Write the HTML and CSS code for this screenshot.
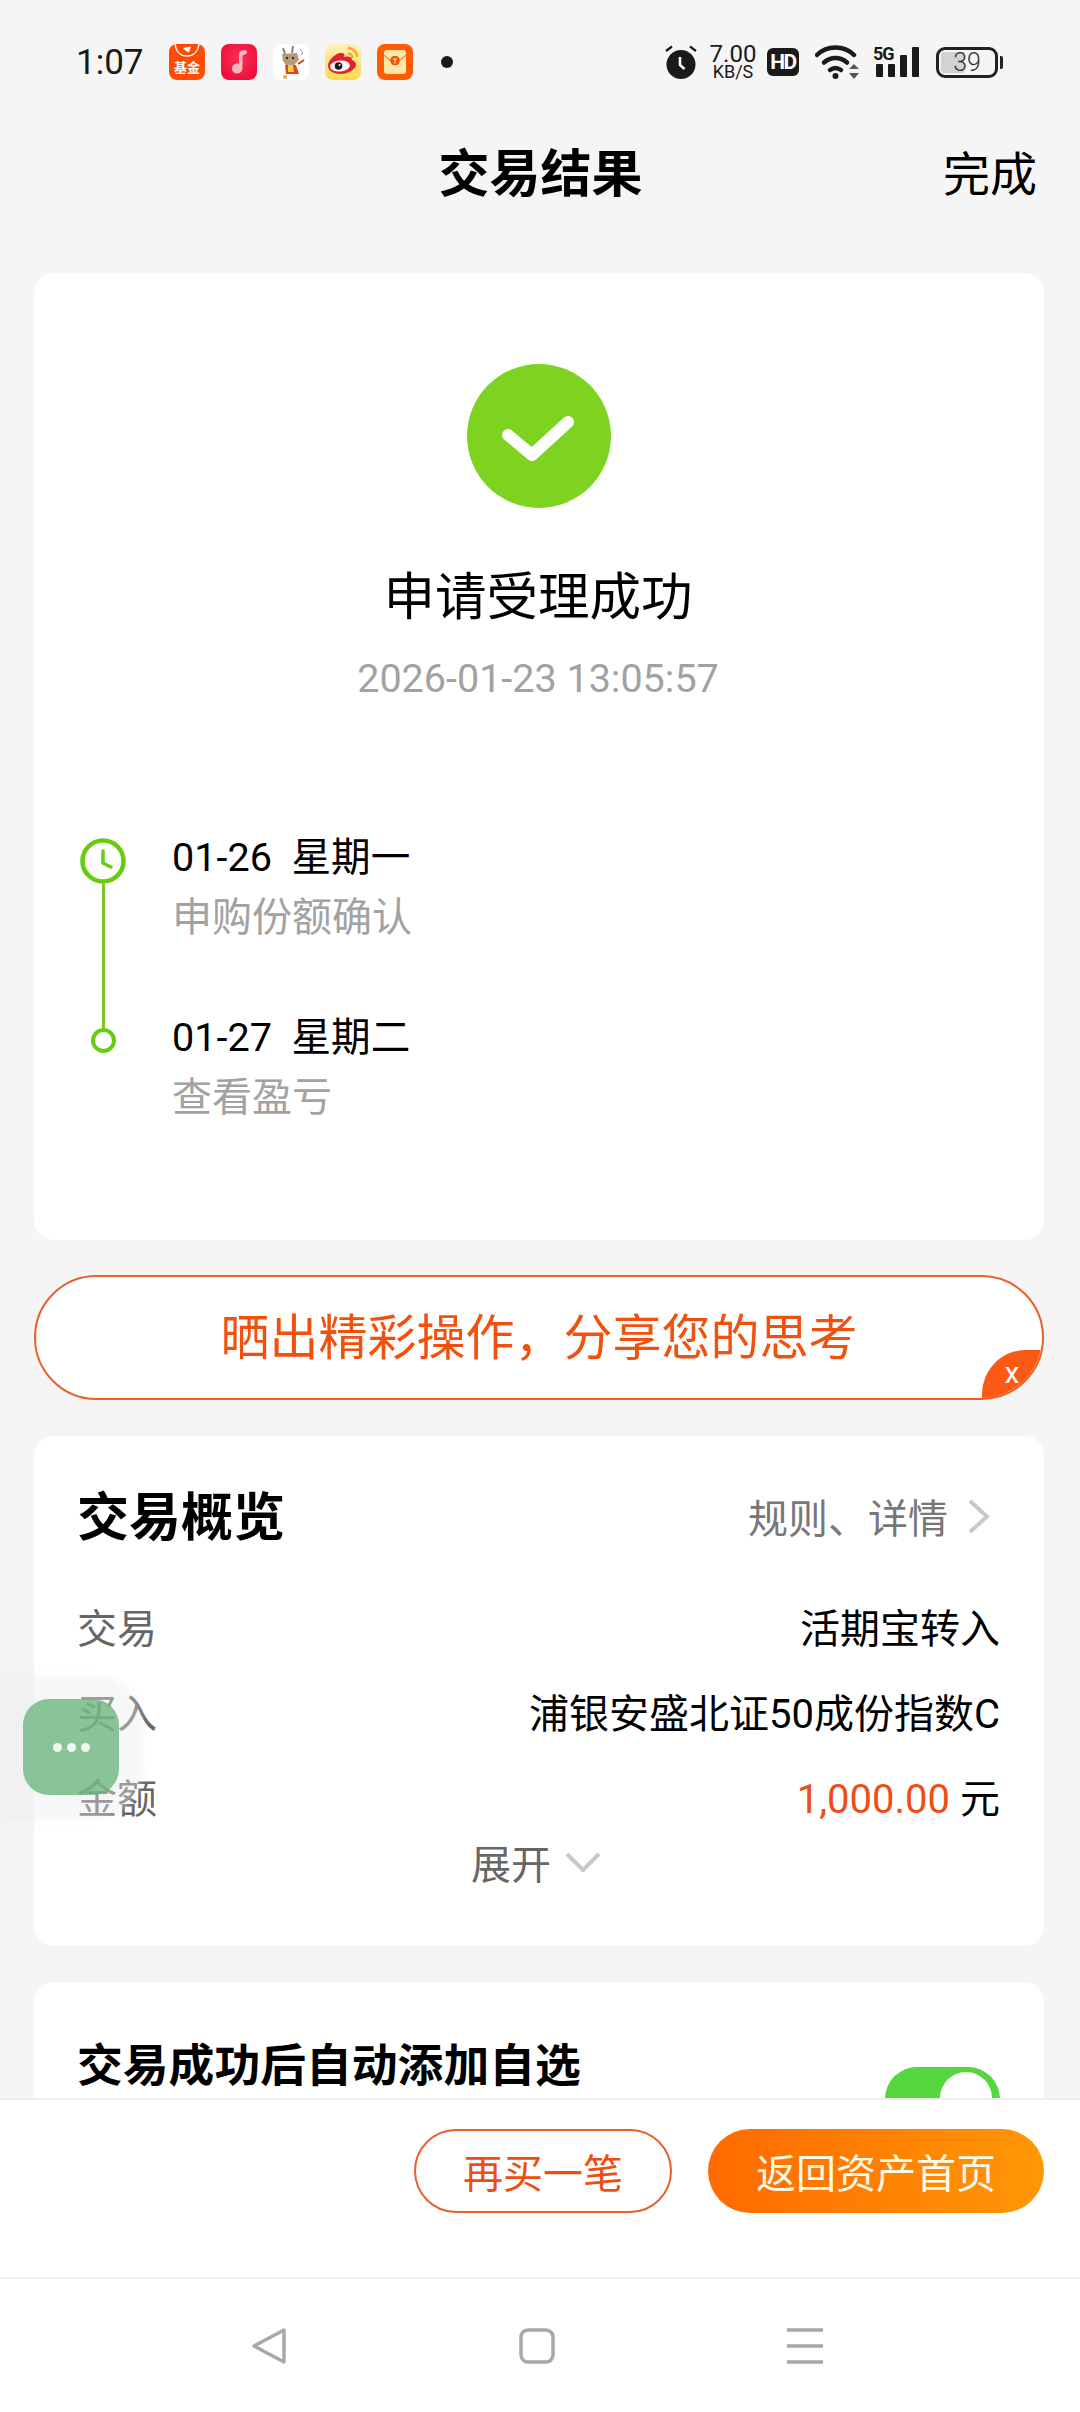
FILE: index.html
```html
<!DOCTYPE html>
<html lang="zh-CN">
<head>
    <meta charset="UTF-8">
    <meta name="viewport" content="width=device-width, initial-scale=1.0">
    <title>交易结果</title>
    <link rel="stylesheet" href="styles.css">
</head>
<body>
    <div class="page">
        <div class="status-bar">
            <span class="status-time">1:07</span>
            <div class="status-apps">
                <svg class="app-icon" viewBox="0 0 36 36">
                    <rect width="36" height="36" rx="8" fill="#ff4c04"/>
                    <path d="M6 0c1 8 6 12 12 12s11-4 12-12" fill="none" stroke="#fff" stroke-width="1.300"/>
                    <path d="M14 4l8-1.500-2 6-3-1.500z" fill="#fff"/>
                    <text class="app-text" x="18" y="28" text-anchor="middle">基金</text>
                </svg>
                <svg class="app-icon" viewBox="0 0 36 36">
                    <defs>
                        <radialGradient id="musicBg" cx="50%" cy="40%" r="70%">
                            <stop offset="0" stop-color="#f5304f"/>
                            <stop offset="1" stop-color="#ee0a3c"/>
                        </radialGradient>
                    </defs>
                    <rect width="36" height="36" rx="8" fill="url(#musicBg)"/>
                    <path d="M18 11c0-3 1-4 3-4.500 2-.4 5-.8 5 1.500 0 2-1.500 2.500-3 2.800-1.500.3-1.500 1-1.500 2V24c0 3.300-2.500 5.500-5.500 5.500S11 27.300 11 24.500s2.500-5 5-5c.8 0 1.500.1 2 .4z" fill="#fbb4c2"/>
                </svg>
                <svg class="app-icon" viewBox="0 0 36 36">
                    <rect width="36" height="36" rx="8" fill="#fff"/>
                    <path d="M10 4l2 6M20 2l-1 7" stroke="#8d8271" stroke-width="2" fill="none"/>
                    <path d="M9 10l15-1 2 7-5 5h-8l-3-4z" fill="#b79a7c"/>
                    <circle cx="14" cy="14" r="1.200" fill="#333"/>
                    <circle cx="20" cy="14" r="1.200" fill="#333"/>
                    <path d="M12 21h11l3 9H13z" fill="#e2451b"/>
                    <path d="M15 21h5l1 7h-6z" fill="#f6c845"/>
                    <path d="M25 20l6-4" stroke="#c9421d" stroke-width="2"/>
                    <path d="M27 5l3 4-2 2" stroke="#9a9a9a" fill="none"/>
                    <circle cx="12" cy="33" r="2" fill="#e8b13a"/>
                </svg>
                <svg class="app-icon" viewBox="0 0 36 36">
                    <defs>
                        <linearGradient id="weiboBg" x1="0" y1="0" x2="0" y2="1">
                            <stop offset="0" stop-color="#fff0bd"/>
                            <stop offset="1" stop-color="#ffd84d"/>
                        </linearGradient>
                    </defs>
                    <rect width="36" height="36" rx="8" fill="url(#weiboBg)"/>
                    <path d="M3 22c0-6 7-12 12-13 4-.6 5 1 4 4 4-1 8-.5 8 3 3 1 4 3 4 5 0 4-8 9-15 9S3 27 3 22z" fill="#e8202a"/>
                    <ellipse cx="15" cy="22" rx="10" ry="5.500" fill="#fff" transform="rotate(-6 15 22)"/>
                    <circle cx="13.500" cy="22" r="3.800" fill="#1a1a1a"/>
                    <circle cx="14.500" cy="21" r="1" fill="#fff"/>
                    <path d="M23 4c5 0 9 4 9 9M23 9.500c2.500 0 4.500 2 4.500 4.500" stroke="#f5a623" stroke-width="2.400" fill="none"/>
                </svg>
                <svg class="app-icon" viewBox="0 0 36 36">
                    <rect width="36" height="36" rx="8" fill="#ff5a04"/>
                    <rect x="7" y="6" width="22" height="24" rx="3" fill="#ffe8a6"/>
                    <path d="M7 11c4 4 8 7 11 7s7-3 11-7" fill="none" stroke="#f58a3a" stroke-width="1.200"/>
                    <circle cx="18" cy="16.500" r="4.800" fill="#f0530a"/>
                    <path d="M16 15h4M18 15v4.500" stroke="#ffe8a6" stroke-width="1.200"/>
                </svg>
            </div>
            <span class="status-dot"></span>
            <div class="status-right">
                <svg class="alarm-icon" viewBox="0 0 32 34">
                    <circle cx="16" cy="19.500" r="14.500" fill="#1a1a1a"/>
                    <path d="M1 6l6-4.500M31 6l-6-4.500" stroke="#1a1a1a" stroke-width="2.200"/>
                    <path d="M15 12v8l4.500 4" stroke="#fff" stroke-width="2.600" fill="none"/>
                </svg>
                <div class="net-speed">
                    <span class="net-value">7.00</span>
                    <span class="net-unit">KB/S</span>
                </div>
                <span class="hd-badge">HD</span>
                <svg class="wifi-icon" viewBox="0 0 44 34">
                    <path d="M2 10C12 0 29 0 39 10" stroke="#1a1a1a" stroke-width="4.500" fill="none" stroke-linecap="round"/>
                    <path d="M9 17.500c7-6 16-6 23 0" stroke="#1a1a1a" stroke-width="4.500" fill="none" stroke-linecap="round"/>
                    <path d="M15 25c4-3 7-3 11 0" stroke="#1a1a1a" stroke-width="4.500" fill="none" stroke-linecap="round"/>
                    <circle cx="20.500" cy="31" r="3" fill="#1a1a1a"/>
                    <path d="M34 24l5-5 5 5zM34 28l5 6 5-6z" fill="#555"/>
                </svg>
                <div class="signal">
                    <span class="signal-label">5G</span>
                    <div class="signal-bars">
                        <i class="bar-1"></i><i class="bar-2"></i><i class="bar-3"></i><i class="bar-4"></i>
                    </div>
                </div>
                <div class="battery">
                    <div class="battery-body">
                        <span class="battery-fill"></span>
                        <span class="battery-text">39</span>
                    </div>
                    <span class="battery-tip"></span>
                </div>
            </div>
        </div>

        <div class="nav-bar">
            <span></span>
            <h1 class="nav-title">交易结果</h1>
            <a class="nav-done">完成</a>
        </div>

        <div class="content">
            <div class="card result-card">
                <svg class="success-icon" viewBox="0 0 144 144">
                    <circle cx="72" cy="72" r="72" fill="#7ed321"/>
                    <path d="M41 71l24 20 36-33" fill="none" stroke="#fff" stroke-width="12" stroke-linecap="round" stroke-linejoin="round"/>
                </svg>
                <div class="result-title">申请受理成功</div>
                <div class="result-time">2026-01-23 13:05:57</div>

                <div class="timeline">
                    <div class="step step-first">
                        <div class="step-rail">
                            <svg class="step-clock" viewBox="0 0 46 46">
                                <circle cx="23" cy="23" r="20.500" fill="#fff" stroke="#66cc11" stroke-width="4.500"/>
                                <path d="M23 13v12l8 4" fill="none" stroke="#66cc11" stroke-width="3.500" stroke-linecap="round"/>
                            </svg>
                            <span class="step-line"></span>
                        </div>
                        <div class="step-text">
                            <div class="step-date">01-26&nbsp;&nbsp;星期一</div>
                            <div class="step-desc">申购份额确认</div>
                        </div>
                    </div>
                    <div class="step">
                        <div class="step-rail">
                            <span class="step-dot"></span>
                        </div>
                        <div class="step-text">
                            <div class="step-date">01-27&nbsp;&nbsp;星期二</div>
                            <div class="step-desc">查看盈亏</div>
                        </div>
                    </div>
                </div>
            </div>

            <div class="share-pill">
                <span class="share-text">晒出精彩操作，分享您的思考</span>
                <span class="share-close">x</span>
            </div>

            <div class="card overview-card">
                <div class="overview-head">
                    <h2 class="card-title">交易概览</h2>
                    <div class="overview-link">
                        <span>规则、详情</span>
                        <svg class="chevron-right" viewBox="0 0 24 37">
                            <path d="M3 3l17 15.500L3 34" fill="none" stroke="#c9c9c9" stroke-width="4"/>
                        </svg>
                    </div>
                </div>
                <div class="info-row">
                    <span class="info-label">交易</span>
                    <span class="info-value">活期宝转入</span>
                </div>
                <div class="info-row">
                    <span class="info-label">买入</span>
                    <span class="info-value">浦银安盛北证50成份指数C</span>
                </div>
                <div class="info-row">
                    <span class="info-label">金额</span>
                    <span class="info-value"><em class="amount">1,000.00</em> 元</span>
                </div>
                <div class="expand">
                    <span>展开</span>
                    <svg class="chevron-down" viewBox="0 0 36 20">
                        <path d="M2 2l16 16L34 2" fill="none" stroke="#c9c9c9" stroke-width="4"/>
                    </svg>
                </div>
            </div>

            <div class="card auto-card">
                <h2 class="auto-title">交易成功后自动添加自选</h2>
                <div class="toggle"><span class="toggle-knob"></span></div>
            </div>
        </div>

        <div class="action-bar">
            <button class="btn btn-outline">再买一笔</button>
            <button class="btn btn-primary">返回资产首页</button>
        </div>

        <div class="system-nav">
            <svg class="sys-icon" viewBox="0 0 36 36">
                <path d="M33 2v32L3 18z" fill="none" stroke="#a8a8a8" stroke-width="3.500" stroke-linejoin="round"/>
            </svg>
            <svg class="sys-icon" viewBox="0 0 36 36">
                <rect x="2" y="2" width="32" height="32" rx="7" fill="none" stroke="#a8a8a8" stroke-width="3.500"/>
            </svg>
            <svg class="sys-icon" viewBox="0 0 36 36">
                <path d="M0 2h36M0 18h36M0 34h36" stroke="#a8a8a8" stroke-width="3.500"/>
            </svg>
        </div>

        <div class="float-shade"></div>
        <div class="float-btn">
            <i></i><i></i><i></i>
        </div>
    </div>
</body>
</html>
```

FILE: styles.css
```css
* {
    margin: 0;
    padding: 0;
    box-sizing: border-box;
    font-family: Roboto, "Noto Sans CJK SC", sans-serif;
}

body {
    background: #f5f5f5;
}

.page {
    position: relative;
    display: flex;
    flex-direction: column;
    width: 1080px;
    height: 2412px;
    overflow: hidden;
    background: #f5f5f5;
    color: #000;
}

/* status bar */
.status-bar {
    display: flex;
    align-items: center;
    height: 124px;
    padding: 0 77px 0 76px;
    flex-shrink: 0;
    color: #1a1a1a;
}

.status-time {
    width: 65px;
    font-size: 35px;
}

.status-apps {
    display: flex;
    gap: 16px;
    margin-left: 28px;
}

.app-icon {
    width: 36px;
    height: 36px;
    display: block;
}

.app-text {
    font-size: 13px;
    font-weight: 700;
    fill: #fff;
    font-family: "Noto Sans CJK SC", sans-serif;
}

.status-dot {
    width: 12px;
    height: 12px;
    margin-left: 28px;
    border-radius: 50%;
    background: #1a1a1a;
}

.status-right {
    display: flex;
    align-items: center;
    margin-left: auto;
}

.alarm-icon {
    width: 32px;
    height: 34px;
}

.net-speed {
    display: flex;
    flex-direction: column;
    align-items: center;
    width: 48px;
    margin-left: 12px;
}

.net-value {
    font-size: 24px;
    line-height: 20px;
}

.net-unit {
    font-size: 18px;
    line-height: 16px;
}

.hd-badge {
    width: 32px;
    height: 28px;
    margin-left: 10px;
    border-radius: 6px;
    background: #1a1a1a;
    color: #fff;
    font-size: 21px;
    font-weight: 700;
    line-height: 28px;
    text-align: center;
    letter-spacing: -1.500px;
}

.wifi-icon {
    width: 44px;
    height: 34px;
    margin-left: 16px;
}

.signal {
    position: relative;
    width: 43px;
    height: 34px;
    margin-left: 17px;
}

.signal-label {
    position: absolute;
    left: -3px;
    top: 0;
    font-size: 18px;
    line-height: 18px;
    font-weight: 700;
    letter-spacing: -1px;
}

.signal-bars {
    display: flex;
    align-items: flex-end;
    gap: 5px;
    height: 32px;
}

.signal-bars i {
    display: block;
    width: 7px;
    background: #1a1a1a;
    border-radius: 1px;
}

.bar-1 { height: 13px; }
.bar-2 { height: 13px; }
.bar-3 { height: 22px; }
.bar-4 { height: 30px; }

.battery {
    display: flex;
    align-items: center;
    margin-left: 17px;
}

.battery-body {
    position: relative;
    display: flex;
    align-items: center;
    justify-content: center;
    width: 62px;
    height: 31px;
    border: 3px solid #222;
    border-radius: 9px;
}

.battery-fill {
    position: absolute;
    left: 2px;
    top: 2px;
    bottom: 2px;
    width: 23px;
    border-radius: 3px 0 0 3px;
    background: #d2d2d2;
}

.battery-text {
    position: relative;
    font-size: 25px;
    font-weight: 300;
    line-height: 25px;
    color: #333;
}

.battery-tip {
    width: 3px;
    height: 13px;
    margin-left: 2px;
    background: #222;
    border-radius: 0 2px 2px 0;
}

/* title bar */
.nav-bar {
    display: grid;
    grid-template-columns: 1fr auto 1fr;
    align-items: center;
    height: 102px;
    padding-right: 43px;
    padding-left: 44px;
    flex-shrink: 0;
}

.nav-title {
    font-size: 51px;
    font-weight: 700;
    line-height: 60px;
}

.nav-done {
    justify-self: end;
    font-size: 47px;
    line-height: 60px;
}

/* scroll area */
.content {
    flex: 1;
    min-height: 0;
    overflow: hidden;
    padding: 47px 36px 0 34px;
}

.card {
    background: #fff;
    border-radius: 20px;
}

.result-card {
    display: flex;
    flex-direction: column;
    height: 967px;
    padding: 91px 46px 0;
}

.success-icon {
    width: 144px;
    height: 144px;
    margin-left: -1px;
    align-self: center;
    flex-shrink: 0;
}

.result-title {
    margin-top: 60px;
    font-size: 51.500px;
    line-height: 60px;
    text-align: center;
    padding-right: 2px;
}

.result-time {
    margin-top: 29px;
    font-size: 39.500px;
    line-height: 44px;
    color: #a2a2a2;
    text-align: center;
    padding-right: 2px;
}

.timeline {
    margin-top: 132px;
}

.step {
    display: flex;
}

.step-first {
    height: 180px;
}

.step-rail {
    display: flex;
    flex-direction: column;
    align-items: center;
    width: 46px;
    padding-top: 5px;
    flex-shrink: 0;
}

.step-clock {
    width: 46px;
    height: 46px;
    flex-shrink: 0;
}

.step-line {
    flex: 1;
    width: 3px;
    margin-bottom: -15px;
    background: #7ec61f;
}

.step-dot {
    width: 25px;
    height: 25px;
    margin-top: 10px;
    border: 4px solid #66cc11;
    border-radius: 50%;
    background: #fff;
}

.step-text {
    margin-left: 46px;
}

.step-date {
    font-size: 39.600px;
    line-height: 50px;
}

.step-desc {
    margin-top: 10px;
    font-size: 40px;
    line-height: 50px;
    color: #a2a2a2;
}

/* share banner */
.share-pill {
    position: relative;
    display: flex;
    align-items: center;
    justify-content: center;
    height: 125px;
    margin-top: 35px;
    overflow: hidden;
    border: 2px solid #e9602a;
    border-radius: 63px;
    background: #fff;
    color: #f4500d;
    font-size: 49px;
}

.share-text {
    margin-bottom: 8px;
}

.share-close {
    position: absolute;
    right: -2px;
    bottom: -2px;
    width: 62px;
    height: 50px;
    padding-right: 2px;
    border-radius: 44px 0 44px 0;
    background: #fc5a14;
    color: #fff;
    font-size: 30px;
    line-height: 46px;
    text-align: center;
}

/* overview card */
.overview-card {
    height: 510px;
    margin-top: 36px;
    padding: 53px 44px 0 43px;
}

.overview-head {
    display: flex;
    align-items: center;
    justify-content: space-between;
    height: 60px;
    margin-bottom: 34px;
}

.card-title {
    font-size: 52px;
    font-weight: 700;
    line-height: 60px;
}

.overview-link {
    display: flex;
    align-items: center;
    gap: 19px;
    margin-right: 9px;
    margin-bottom: 6px;
    font-size: 40px;
    color: #777;
}

.chevron-right {
    width: 24px;
    height: 37px;
}

.info-row {
    display: flex;
    align-items: center;
    justify-content: space-between;
    height: 85px;
    font-size: 40px;
}

.info-label {
    color: #666;
}

.amount {
    font-style: normal;
    color: #ee4d14;
}

.expand {
    display: flex;
    align-items: center;
    justify-content: center;
    gap: 14px;
    height: 46px;
    margin-top: 1px;
    margin-right: 5px;
    font-size: 40px;
    color: #666;
}

.chevron-down {
    width: 36px;
    height: 20px;
}

/* auto add card */
.auto-card {
    display: flex;
    align-items: flex-start;
    justify-content: space-between;
    height: 220px;
    margin-top: 36px;
    padding: 55px 44px 0 43px;
}

.auto-title {
    font-size: 45.800px;
    font-weight: 700;
    line-height: 60px;
}

.toggle {
    display: flex;
    justify-content: flex-end;
    width: 115px;
    height: 64px;
    margin-top: 30px;
    padding: 5px 8px;
    border-radius: 32px;
    background: #55d63f;
}

.toggle-knob {
    width: 52px;
    height: 52px;
    border-radius: 50%;
    background: #fff;
}

/* bottom actions */
.action-bar {
    display: flex;
    align-items: flex-start;
    justify-content: flex-end;
    gap: 36px;
    height: 181px;
    padding: 29px 36px 0 0;
    flex-shrink: 0;
    border-top: 2px solid #eee;
    border-bottom: 2px solid #f2f2f2;
    background: #fff;
}

.btn {
    height: 84px;
    border-radius: 42px;
    font-size: 40px;
    cursor: pointer;
}

.btn-outline {
    width: 258px;
    border: 2px solid #e9602a;
    background: #fff;
    color: #ee4d14;
}

.btn-primary {
    width: 336px;
    border: none;
    background: linear-gradient(90deg, #ff6a00, #ff9706);
    color: #fff9e8;
}

/* system navigation */
.system-nav {
    display: flex;
    align-items: center;
    justify-content: center;
    gap: 232px;
    height: 133px;
    padding-right: 7px;
    flex-shrink: 0;
    background: #fff;
}

.sys-icon {
    width: 36px;
    height: 36px;
}

/* floating button */
.float-shade {
    position: absolute;
    left: 0;
    top: 1675px;
    width: 143px;
    height: 145px;
    border-radius: 0 50px 50px 0;
    background: rgba(236, 236, 236, 0.4);
    filter: blur(3px);
}

.float-btn {
    position: absolute;
    left: 23px;
    top: 1699px;
    display: flex;
    align-items: center;
    justify-content: center;
    gap: 5px;
    width: 96px;
    height: 96px;
    border-radius: 26px;
    background: rgba(100, 178, 120, 0.75);
}

.float-btn i {
    display: block;
    width: 9px;
    height: 9px;
    border-radius: 50%;
    background: #eef7f0;
}
```
